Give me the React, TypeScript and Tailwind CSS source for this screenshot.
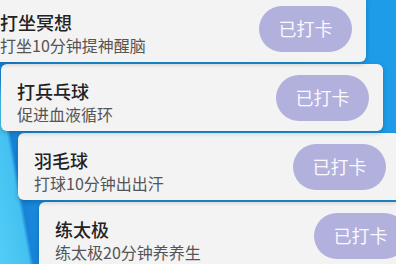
import React from "react";

const items = [
  { title: "打坐冥想", sub: "打坐10分钟提神醒脑", ml: "ml-[-16px]", z: "z-40" },
  { title: "打兵乓球", sub: "促进血液循环", ml: "ml-[1px]", z: "z-30" },
  { title: "羽毛球", sub: "打球10分钟出出汗", ml: "ml-[18px]", z: "z-20" },
  { title: "练太极", sub: "练太极20分钟养养生", ml: "ml-[39px]", z: "z-10" },
];

export default function App() {
  return (
    <div
      className="relative w-[396px] h-[264px] overflow-hidden bg-[linear-gradient(80deg,#52cdf7_0px,#44c1f1_29px,#1783d8_33px,#1a8fdf_55px,#1c9ae6_95px,#1e9ce7_100%)]"
      style={{ fontFamily: '"Noto Sans CJK SC", "Noto Sans", sans-serif' }}
    >
      <div className="flex flex-col gap-[2px] mt-[-5px]">
        {items.map((it) => (
          <div
            key={it.title}
            className={`relative ${it.z} ${it.ml} w-[382px] h-[67px] shrink-0 flex items-center justify-between pl-[16px] pr-[14px] bg-[#f3f3f3] rounded-[6px] shadow-[0_2px_5px_rgba(0,0,0,0.22)]`}
          >
            <div className="flex flex-col mt-[8px]">
              <div className="text-[18px] leading-[24px] font-[450] text-[#222222]">{it.title}</div>
              <div className="text-[16px] leading-[22px] text-[#555555]">{it.sub}</div>
            </div>
            <div className="w-[93px] h-[46px] shrink-0 rounded-full bg-[#b2b0dd] flex items-center justify-center text-[18px] font-normal text-[#fafafe]">
              已打卡
            </div>
          </div>
        ))}
      </div>
    </div>
  );
}
